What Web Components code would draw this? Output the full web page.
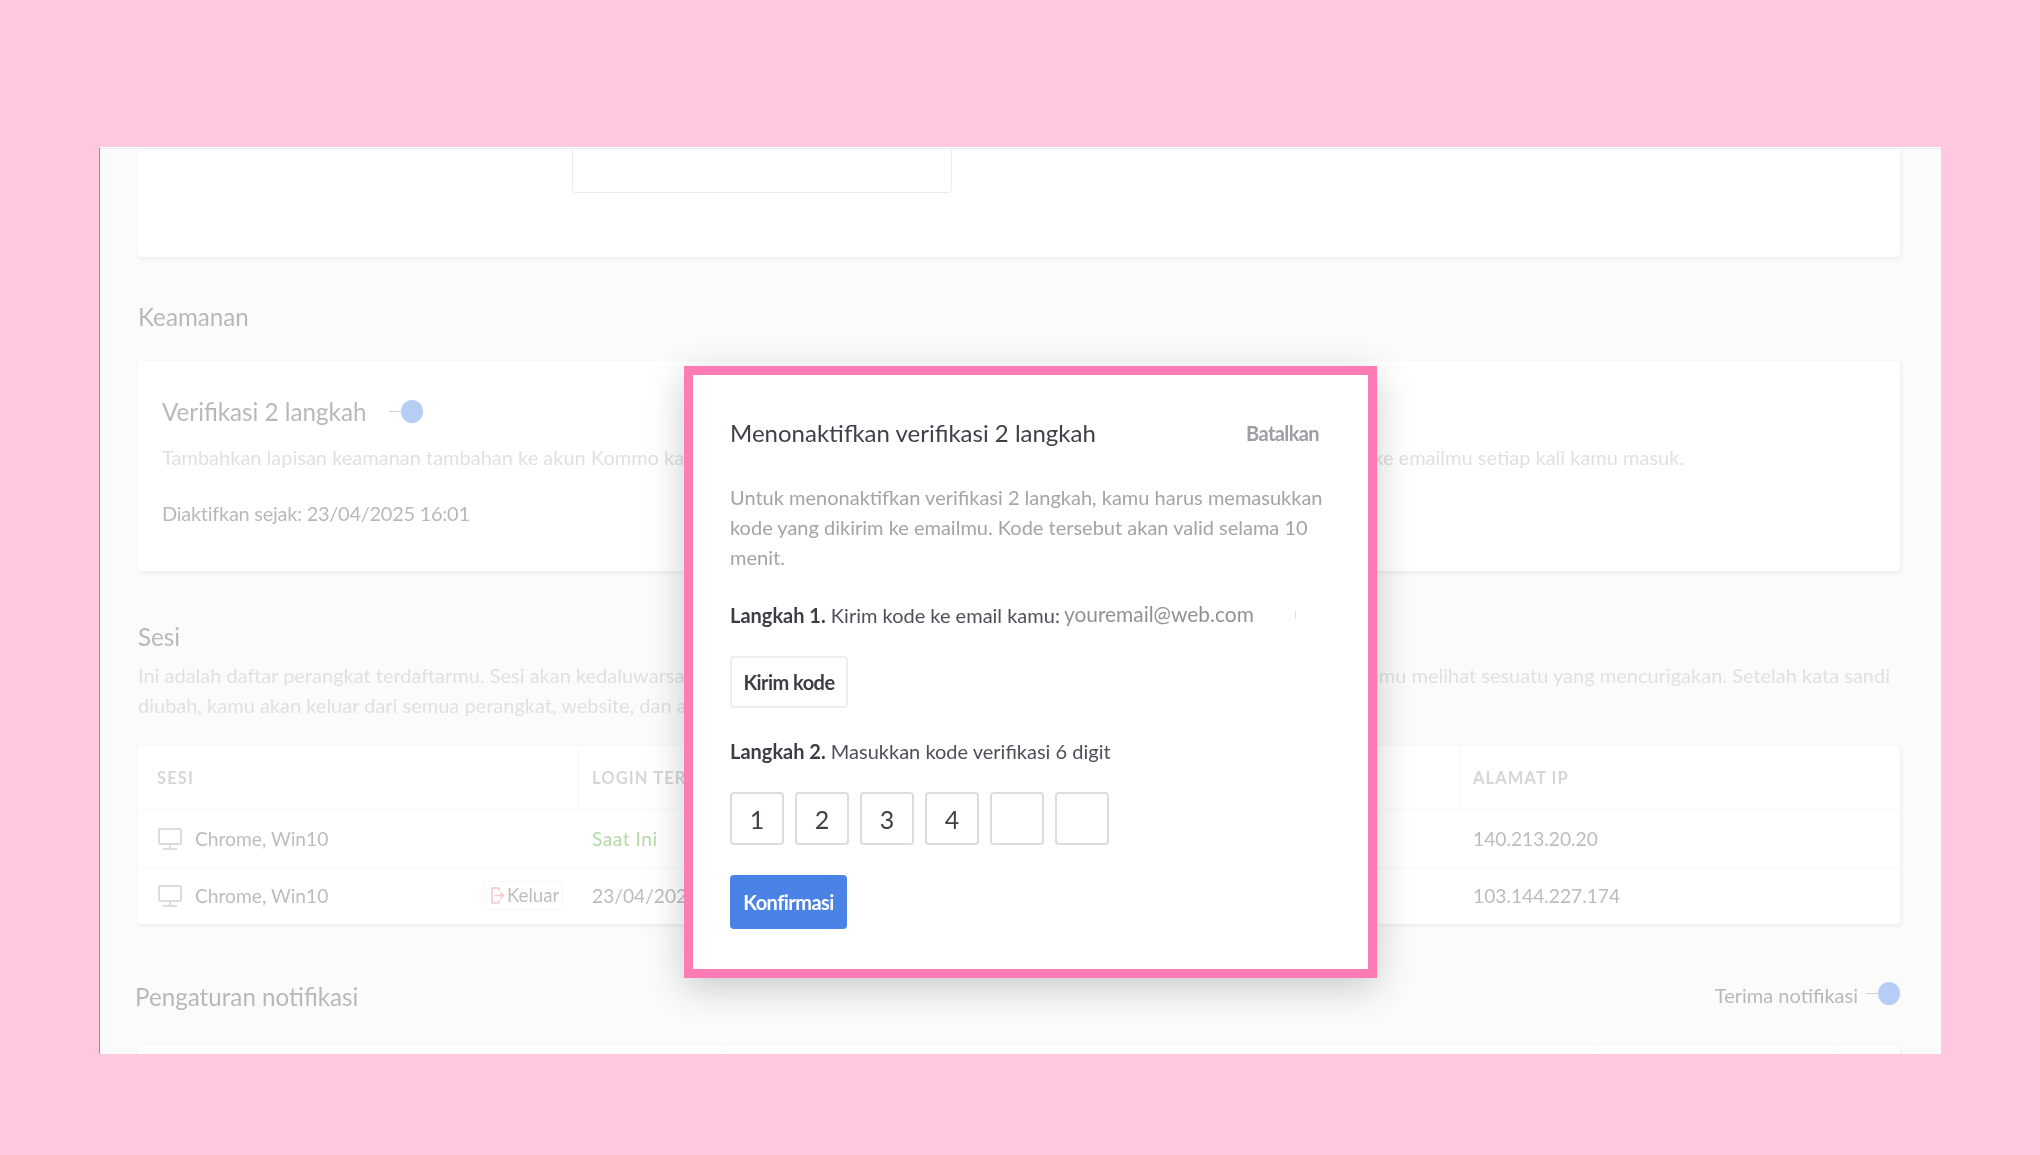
<!DOCTYPE html>
<html lang="id"><head><meta charset="utf-8"><title>Verifikasi 2 langkah</title>
<style>
html,body{margin:0;height:100%;background:#fec8df;overflow:hidden}
body{font-family:Lato,"Noto Sans",sans-serif;color:#4e4e4e;font-size:20px;line-height:30px;}
</style></head><body>
<app-window>
  <settings-page></settings-page>
  <dialog-veil></dialog-veil>
  <disable-dialog></disable-dialog>
</app-window>
<script>
const def=(name,html)=>customElements.define(name,class extends HTMLElement{
  constructor(){super();this.attachShadow({mode:'open'}).innerHTML=html;}
});
def('app-window',`<style>
:host{display:block;position:relative;box-sizing:border-box;margin:147px 0 0 99px;width:1842px;height:907px;background:#f5f5f5;overflow:hidden;border-left:1px solid #8f8fa0;border-top:1px solid #fff}
</style><slot></slot>`);
def('dialog-veil',`<style>:host{position:absolute;inset:0;background:rgba(255,255,255,.6)}</style>`);
def('toggle-switch',`<style>
:host{display:inline-flex;align-items:center;vertical-align:middle}
i{display:block;width:12px;height:1px;background:#8a8a8a}
b{display:block;width:22px;height:23px;border-radius:50%;background:#4a82e6}
</style><i></i><b></b>`);
def('section-card',`<style>
:host{display:block;background:#fff;border-radius:4px;box-shadow:1px 2px 5px rgba(0,0,0,.16)}
</style><slot></slot>`);
def('monitor-icon',`<style>:host{display:block;width:24px;height:22px}svg{display:block}</style>
<svg width="24" height="22" viewBox="0 0 24 22" fill="none" stroke="#a8a8a8" stroke-width="2"><rect x="1" y="1" width="22" height="15" rx="1"/><path d="M12 16v4M5 21h14"/></svg>`);
def('session-row',`<style>
:host{display:grid;grid-template-columns:440px 881px 1fr;height:var(--h,57px);align-items:center;border-bottom:1px solid #eee;box-sizing:border-box;color:#585858;font-size:19.2px}
:host(:last-child){border-bottom:0}
.a{display:flex;align-items:center;padding:0 15px 0 20px;gap:13px}
.s{flex:1}
.b{padding-left:14px}
.c{padding-left:14px}
.k{display:inline-flex;align-items:center;gap:3px;height:29px;width:80px;box-sizing:border-box;border:1px solid #eee;border-radius:4px;padding:0 6px 0 7px;white-space:nowrap;overflow:hidden;position:relative;top:-1px;font-size:18.6px}
.cur{color:#46a019;letter-spacing:.5px}
svg{display:block;flex:none}
.k[hidden]{display:none}
</style>
<div class="a"><monitor-icon></monitor-icon><span class="s" id="n"></span>
<span class="k" id="k"><svg width="13" height="17" viewBox="0 0 13 17" fill="none" stroke="#f27a7a" stroke-width="1.6"><path d="M8 4V1H1v15h7v-3"/><path d="M4 8.5h8M9.5 5.5l3 3-3 3"/></svg>Keluar</span></div>
<div class="b" id="l"></div><div class="c" id="i"></div>`);
def('session-table',`<style>
:host{display:block}
.h{display:grid;grid-template-columns:440px 881px 1fr;height:63px;border-bottom:1px solid #eee;box-sizing:content-box;font-weight:700;font-size:16.5px;letter-spacing:1.1px;color:#969a9a}
.h div{display:flex;align-items:center;padding-left:13px}
.h div:first-child{padding-left:19px}
.h div+div{border-left:1px solid #eee}
</style><section-card><div class="h"><div>SESI</div><div>LOGIN TERAKHIR</div><div>ALAMAT IP</div></div><slot></slot></section-card>`);
def('page-heading',`<style>:host{display:block;font-size:24.2px;line-height:30px;color:#4e4e4e}</style><slot></slot>`);
def('settings-page',`<style>
:host{display:block;padding:0 41px 0 38px;border-top:1px solid #d5d5d5;filter:blur(.4px)}
.c1{height:108px;border-radius:0 0 4px 4px}
.inp{margin-left:434px;width:380px;height:44px;box-sizing:border-box;border:1px solid #ccc;border-top:0;border-radius:0 0 4px 4px}
.keam{margin-top:45px;margin-bottom:-1px}
.c2{margin-top:30px;height:210px;padding:36px 24px 0;box-sizing:border-box}
.t{display:flex;align-items:center;gap:23px}
.t toggle-switch{position:relative;top:-1px}
.d{color:#b2b2b2}
.c2 .d{margin-top:15px;white-space:nowrap}
.since{margin-top:26px;letter-spacing:-.27px}
.sesi{margin-top:51px}
.sd{margin-top:8px;color:#b2b2b2;white-space:nowrap}
.g1{word-spacing:41px}
.g2{word-spacing:6.9px}
session-table{margin-top:26px}
.n{margin-top:58px;height:30px;display:flex;justify-content:space-between;align-items:center;margin-left:-3px}
.n .r{display:flex;align-items:center;gap:8px;margin-bottom:5px}
.n toggle-switch{position:relative;top:-1px}
.b{margin-top:34px;height:60px;display:grid;grid-template-columns:589px 866px 241px 1fr;border-radius:4px 4px 0 0}
.b div+div{border-left:1px solid #eee}
</style>
<section-card class="c1"><div class="inp"></div></section-card>
<page-heading class="keam">Keamanan</page-heading>
<section-card class="c2">
  <page-heading class="t"><span>Verifikasi 2 langkah</span><toggle-switch></toggle-switch></page-heading>
  <div class="d">Tambahkan lapisan keamanan tambahan ke akun Kommo kamu <span class="g1">dengan mewajibkan kode verifikasi yang dikirimkan</span> ke emailmu setiap kali kamu masuk.</div>
  <div class="since">Diaktifkan sejak: 23/04/2025 16:01</div>
</section-card>
<page-heading class="sesi">Sesi</page-heading>
<div class="sd">Ini adalah daftar perangkat terdaftarmu. Sesi akan kedaluwarsa <span class="g2">secara otomatis setelah beberapa waktu. Keluarlah dari perangkat jika</span> kamu melihat sesuatu yang mencurigakan. Setelah kata sandi<br>diubah, kamu akan keluar dari semua perangkat, website, dan aplikasi.</div>
<session-table>
  <session-row style="--h:58px" data-n="Chrome, Win10" data-l="Saat Ini" data-i="140.213.20.20" data-cur="1"></session-row>
  <session-row style="--h:56px" data-n="Chrome, Win10" data-l="23/04/2025 16:01" data-i="103.144.227.174"></session-row>
</session-table>
<div class="n"><page-heading>Pengaturan notifikasi</page-heading><div class="r"><span>Terima notifikasi</span><toggle-switch></toggle-switch></div></div>
<section-card class="b"><div></div><div></div><div></div><div></div></section-card>`);
def('otp-input',`<style>
:host{display:flex;gap:11px}
span{display:flex;align-items:center;justify-content:center;width:54px;height:53px;box-sizing:border-box;border:2px solid #dcdcdc;border-radius:4px;font-size:25px;color:#3d4249}
</style><span>1</span><span>2</span><span>3</span><span>4</span><span></span><span></span>`);
def('action-btn',`<style>
:host{display:inline-flex;align-items:center;justify-content:center;box-sizing:border-box;border-radius:4px;font-weight:700;font-size:20px;letter-spacing:-.55px}
</style><slot></slot>`);
def('disable-dialog',`<style>
:host{position:absolute;left:584px;top:218px;width:693px;height:612px;box-sizing:border-box;border:9px solid #ff7bb5;background:#fff;color:#3d4249;box-shadow:0 10px 36px rgba(0,0,0,.2)}
.in{padding:43px 44px 40px 37px;filter:blur(.4px)}
.top{display:flex;justify-content:space-between}
h2{margin:0;font:inherit;font-size:24px}
.x{font-weight:700;color:#9a9fa3;margin-right:5px;letter-spacing:-.6px}
p{margin:34px 0 0;color:#a0a5a8}
.s1{margin-top:28px;white-space:nowrap;color:#4c5157;display:flex}
b{color:#3a3f46}
.em{color:#8d9296;font-size:20.9px;margin:-1px 0 0 4px}
.tick{width:1px;height:8px;background:#ddd;margin:11px 0 0 41px}
.kirim{margin-top:26px;display:block;height:52px}
.s2{margin-top:28px;color:#4c5157}
otp-input{margin-top:26px}
.go{margin-top:30px;display:block;height:54px}
action-btn{width:118px;height:52px;border:2px solid #eee;color:#3a3f46}
action-btn.blue{width:117px;height:54px;background:#4a82e6;border:0;color:#fff}
</style>
<div class="in">
<div class="top"><h2>Menonaktifkan verifikasi 2 langkah</h2><span class="x">Batalkan</span></div>
<p>Untuk menonaktifkan verifikasi 2 langkah, kamu harus memasukkan kode yang dikirim ke emailmu. Kode tersebut akan valid selama 10 menit.</p>
<div class="s1"><span><b>Langkah 1.</b> Kirim kode ke email kamu:</span><span class="em">youremail@web.com</span><i class="tick"></i></div>
<div class="kirim"><action-btn>Kirim kode</action-btn></div>
<div class="s2"><b>Langkah 2.</b> Masukkan kode verifikasi 6 digit</div>
<otp-input></otp-input>
<div class="go"><action-btn class="blue">Konfirmasi</action-btn></div>
</div>`);
document.querySelector('settings-page').shadowRoot.querySelectorAll('session-row').forEach(r=>{
  const s=r.shadowRoot;
  s.getElementById('n').textContent=r.dataset.n;
  s.getElementById('l').textContent=r.dataset.l;
  s.getElementById('i').textContent=r.dataset.i;
  if(r.dataset.cur){s.getElementById('l').className='b cur';s.getElementById('k').hidden=true;}
});
</script>
</body></html>
